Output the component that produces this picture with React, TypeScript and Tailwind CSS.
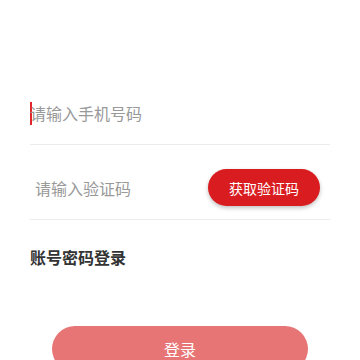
import React from "react";

export default function App() {
  return (
    <div
      className="w-[360px] h-[360px] overflow-hidden bg-white px-[30px] pt-[82px]"
      style={{ fontFamily: '"Noto Sans CJK SC", "Noto Sans", sans-serif' }}
    >
      <div className="h-[63px] flex items-center border-b border-[#ececec]">
        <div className="relative flex items-center">
          <span className="w-[2px] h-[23px] bg-[#e0262b]" />
          <span className="text-[16px] leading-none text-[#999999] ml-[-2px]">请输入手机号码</span>
        </div>
      </div>
      <div className="pt-[24px] pb-[13px] flex items-center justify-between border-b border-[#ececec]">
        <span className="pl-[5px] text-[16px] leading-none text-[#999999]">请输入验证码</span>
        <button className="w-[112px] h-[37px] mr-[10px] rounded-full bg-[#d91c1f] text-white text-[14px] leading-none shadow-[0_2px_4px_rgba(0,0,0,0.25)]">
          获取验证码
        </button>
      </div>
      <div className="pt-[29px] text-[16px] leading-none font-bold text-[#333333]">账号密码登录</div>
      <div className="pt-[61px] flex justify-center">
        <button className="w-[256px] h-[46px] rounded-full bg-[#e87575] text-white text-[16px] leading-none">
          登录
        </button>
      </div>
    </div>
  );
}
